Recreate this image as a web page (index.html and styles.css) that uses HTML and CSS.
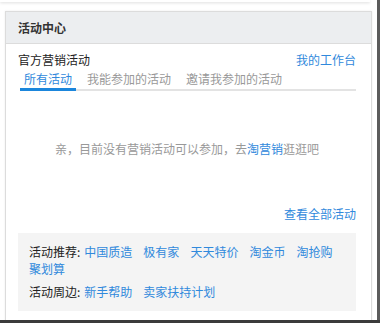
FILE: index.html
```html
<!DOCTYPE html>
<html lang="zh-CN">
<head>
  <meta charset="UTF-8" />
  <meta name="viewport" content="width=device-width, initial-scale=1.0" />
  <title>活动中心</title>
  <link rel="stylesheet" href="styles.css">
</head>
<body>
  <div class="prev-card"></div>

  <div class="card">
    <div class="card-header">活动中心</div>
    <div class="card-body">
      <div class="row">
        <span class="row-title">官方营销活动</span>
        <a class="link" href="#">我的工作台</a>
      </div>

      <ul class="tabs">
        <li class="tab active">所有活动</li>
        <li class="tab">我能参加的活动</li>
        <li class="tab">邀请我参加的活动</li>
      </ul>

      <div class="empty">
        亲，目前没有营销活动可以参加，去<a class="link" href="#">淘营销</a>逛逛吧
      </div>

      <div class="more">
        <a class="link" href="#">查看全部活动</a>
      </div>

      <div class="recommend">
        <p><span class="label">活动推荐:</span><a class="link" href="#">中国质造</a><a class="link" href="#">极有家</a><a class="link" href="#">天天特价</a><a class="link" href="#">淘金币</a><a class="link" href="#">淘抢购</a><a class="link" href="#">聚划算</a></p>
        <p><span class="label">活动周边:</span><a class="link" href="#">新手帮助</a><a class="link" href="#">卖家扶持计划</a></p>
      </div>
    </div>
  </div>
</body>
</html>
```

FILE: styles.css
```css
html {
  background: linear-gradient(to bottom, #5b5b5b 320px, #3b3b3b 320px);
  height: 100%;
}

body {
  margin: 0;
  width: 377px;
  height: 320px;
  overflow: hidden;
  background: #fff;
  font-family: "Noto Sans CJK SC", "Liberation Sans", sans-serif;
  font-size: 12px;
  color: #333;
}

.prev-card {
  width: 370px;
  height: 2px;
  background: #fff;
  box-shadow: 0 1px 3px rgba(0, 0, 0, 0.15);
}

.card {
  box-sizing: border-box;
  width: 367px;
  margin: 9px 0 0 5px;
  border: 1px solid #dcdcdc;
  box-shadow: 0 0 2px rgba(0, 0, 0, 0.08);
  background: #fff;
}

.card-header {
  height: 31px;
  line-height: 31px;
  padding-left: 12px;
  background: #eceef0;
  border-bottom: 1px solid #dcdcdc;
  font-weight: bold;
  color: #333;
}

.card-body {
  padding: 7px 15px 20px 12px;
}

.link {
  color: #3089dc;
  text-decoration: none;
}

.row {
  display: flex;
  justify-content: space-between;
  line-height: 18px;
}

.row-title {
  color: #222;
}

.tabs {
  display: flex;
  list-style: none;
  margin: 2px 0 0 2px;
  padding: 0;
  border-bottom: 2px solid #e3e3e3;
}

.tab {
  line-height: 16px;
  padding: 0 4px 1px;
  margin-right: 7px;
  margin-bottom: -2px;
  border-bottom: 3px solid transparent;
  color: #999;
}

.tab.active {
  color: #3089dc;
  border-bottom-color: #1b86dc;
}

.empty {
  padding: 49px 0 47px;
  line-height: 18px;
  text-align: center;
  color: #999;
}

.more {
  line-height: 18px;
  text-align: right;
}

.recommend {
  margin-top: 10px;
  padding: 10px 11px 11px;
  background: #f4f4f4;
}

.recommend p {
  margin: 0;
  line-height: 17px;
}

.recommend p + p {
  margin-top: 6px;
}

.recommend .label {
  color: #222;
  margin-right: 4px;
}

.recommend .link {
  display: inline-block;
  margin-right: 11px;
}
```
